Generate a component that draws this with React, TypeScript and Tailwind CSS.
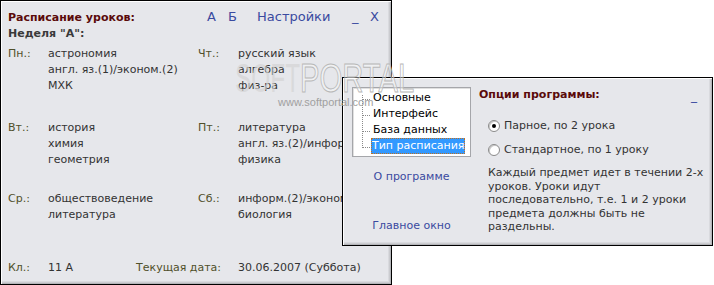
import React from "react";

const font = { fontFamily: '"DejaVu Sans", Verdana, sans-serif' };

const days = [
  {
    left: { label: "Пн.:", items: ["астрономия", "англ. яз.(1)/эконом.(2)", "МХК"] },
    right: { label: "Чт.:", items: ["русский язык", "алгебра", "физ-ра"] },
    mt: "mt-[4px]",
  },
  {
    left: { label: "Вт.:", items: ["история", "химия", "геометрия"] },
    right: { label: "Пт.:", items: ["литература", "англ. яз.(2)/информ.(1)", "физика"] },
    mt: "mt-[26px]",
  },
  {
    left: { label: "Ср.:", items: ["обществоведение", "литература"] },
    right: { label: "Сб.:", items: ["информ.(2)/эконом.(1)", "биология"] },
    mt: "mt-[23px]",
  },
];

function Radio({ checked }: { checked?: boolean }) {
  return (
    <span className="w-[12px] h-[12px] rounded-full bg-white border border-[#8a8a8a] shadow-[inset_1px_1px_0_#c8c8c8] flex items-center justify-center">
      {checked && <span className="w-[4px] h-[4px] rounded-full bg-black" />}
    </span>
  );
}

export default function App() {
  return (
    <div className="relative w-[714px] h-[285px] bg-white overflow-hidden text-[11px] leading-[16px]" style={font}>
      {/* main window */}
      <div className="absolute left-0 top-0 w-[392px] h-[285px] bg-[#e6e7eb] border border-black shadow-[inset_1px_1px_0_#fff,inset_-1px_-1px_0_#b4b5b9,inset_-2px_-2px_0_#cbccd0,inset_-3px_-3px_0_#d9dade] overflow-hidden">
        <div className="pl-[7px] pt-[8px]">
          <div className="flex items-baseline">
            <div className="w-[199px] font-bold text-[#5a0a0a]">Расписание уроков:</div>
            <div className="flex items-baseline text-[13px] text-[#3a4aa0]">
              <span className="w-[21px]">А</span>
              <span className="w-[29px]">Б</span>
              <span className="w-[95px]">Настройки</span>
              <span className="w-[18px]">_</span>
              <span>X</span>
            </div>
          </div>
          <div className="font-bold text-[#3a3a3a]">Неделя "А":</div>

          {days.map((d, i) => (
            <div key={i} className={`grid grid-cols-[40px_150px_40px_1fr] ${d.mt}`}>
              <div className="text-[#50502a]">{d.left.label}</div>
              <div className="text-[#333]">
                {d.left.items.map((s) => (
                  <div key={s} className="whitespace-nowrap">{s}</div>
                ))}
              </div>
              <div className="text-[#50502a]">{d.right.label}</div>
              <div className="text-[#333]">
                {d.right.items.map((s) => (
                  <div key={s} className="whitespace-nowrap">{s}</div>
                ))}
              </div>
            </div>
          ))}

          <div className="mt-[37px] flex whitespace-nowrap">
            <span className="w-[40px] text-[#50502a]">Кл.:</span>
            <span className="w-[88px] text-[#333]">11 А</span>
            <span className="w-[102px] text-[#50502a]">Текущая дата:</span>
            <span className="text-[#333]">30.06.2007 (Суббота)</span>
          </div>
        </div>
      </div>

      {/* options window */}
      <div className="absolute left-[342px] top-[77px] w-[371px] h-[169px] bg-[#e6e7eb] border border-black shadow-[inset_1px_1px_0_#fff,inset_-1px_-1px_0_#b4b5b9,inset_-2px_-2px_0_#cbccd0,inset_-3px_-3px_0_#d9dade] flex">
        {/* left column */}
        <div className="w-[136px] pl-[9px] pt-[9px] flex flex-col">
          <div className="w-[119px] h-[70px] bg-white border border-[#a5a6aa] shadow-[inset_1px_1px_0_#e0e0e0] flex pt-[2px]">
            <svg width="18" height="66" className="shrink-0">
              <g stroke="#8a8a8a" strokeWidth="1" strokeDasharray="1 1">
                <line x1="9.5" y1="5" x2="9.5" y2="58" />
                <line x1="10" y1="9.5" x2="17" y2="9.5" />
                <line x1="10" y1="25.5" x2="17" y2="25.5" />
                <line x1="10" y1="41.5" x2="17" y2="41.5" />
                <line x1="10" y1="57.5" x2="17" y2="57.5" />
              </g>
            </svg>
            <div className="flex flex-col text-black">
              <div className="px-[2px] whitespace-nowrap">Основные</div>
              <div className="px-[2px] whitespace-nowrap">Интерфейс</div>
              <div className="px-[2px] whitespace-nowrap">База данных</div>
              <div className="px-[1px] whitespace-nowrap bg-[#3399ff] text-white outline-1 outline-dotted outline-[#c07020] -outline-offset-1">
                Тип расписания
              </div>
            </div>
          </div>
          <div className="w-[119px] text-center mt-[12px] text-[#3a4aa0]">О программе</div>
          <div className="w-[119px] text-center mt-[33px] text-[#3a4aa0]">Главное окно</div>
        </div>

        {/* right column */}
        <div className="flex-1 pt-[8px] text-[#333]">
          <div className="flex items-baseline pr-[15px]">
            <span className="font-bold text-[#5a0a0a]">Опции программы:</span>
            <span className="ml-auto text-[#3a4aa0] text-[12px] translate-y-[2px]">_</span>
          </div>
          <div className="mt-[15px] flex items-center gap-[4px] pl-[9px]">
            <Radio checked />
            <span>Парное, по 2 урока</span>
          </div>
          <div className="mt-[8px] flex items-center gap-[4px] pl-[9px]">
            <Radio />
            <span>Стандартное, по 1 уроку</span>
          </div>
          <p className="mt-[8px] pl-[9px] leading-[13.5px] whitespace-nowrap">
            Каждый предмет идет в течении 2-х
            <br />
            уроков. Уроки идут
            <br />
            последовательно, т.е. 1 и 2 уроки
            <br />
            предмета должны быть не
            <br />
            раздельны.
          </p>
        </div>
      </div>

      {/* watermark */}
      <div className="absolute left-[235px] top-[58px] pointer-events-none select-none" style={{ fontFamily: '"Liberation Sans", Arial, sans-serif' }}>
        <div className="flex text-[40px] leading-[40px] whitespace-nowrap">
          <span className="w-[65px]">
            <span className="inline-block origin-left scale-x-[0.61] text-[#d4d4d4]/70">SOFT</span>
          </span>
          <span className="w-[117px]">
            <span className="inline-block origin-left scale-x-[0.73] text-white/40 [-webkit-text-stroke:1px_#b8b8b8]">PORTAL</span>
          </span>
        </div>
        <div className="ml-[43px] -mt-[2px] text-[11px] leading-[12px] text-[#a0a0a0] whitespace-nowrap">
          www.softportal.com
        </div>
      </div>
    </div>
  );
}
